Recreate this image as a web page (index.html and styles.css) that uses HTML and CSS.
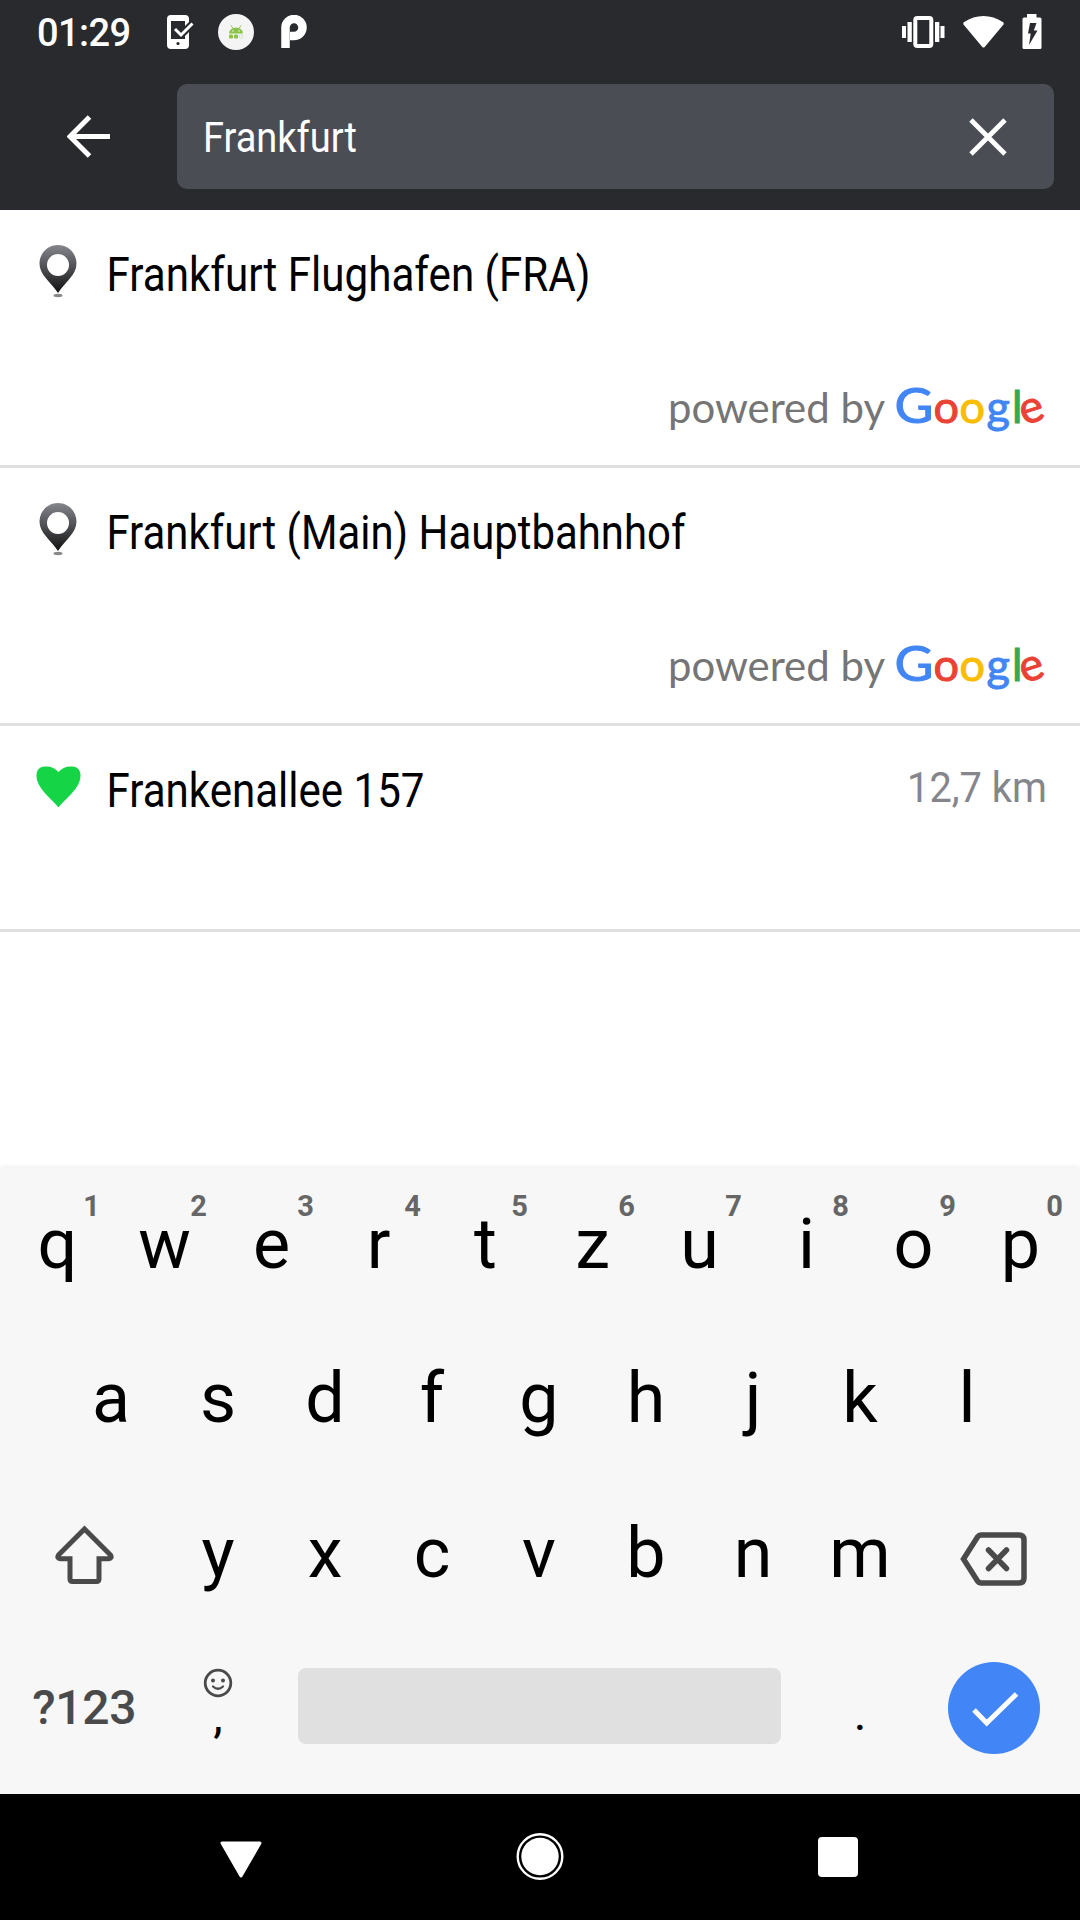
FILE: index.html
```html
<!DOCTYPE html>
<html lang="de">

<head>
    <meta charset="UTF-8">
    <meta name="viewport" content="width=device-width, initial-scale=1.0">
    <title>Frankfurt</title>
    <link rel="stylesheet" href="styles.css">
</head>

<body>

    <header class="header">
        <div class="status-bar">
            <span class="clock">01:29</span>
            <svg class="status-phone" width="28" height="34" viewBox="0 0 28 34">
                <path d="M4 0h14q4 0 4 4v3l-4 4V6H4v18h14v-3l4-4v13q0 4-4 4H4q-4 0-4-4V4q0-4 4-4z" fill="#fff"/>
                <path d="M8 14l6 6 11.500-11.500" fill="none" stroke="#fff" stroke-width="3"/>
                <circle cx="11" cy="28.500" r="1.600" fill="#292a2e"/>
            </svg>
            <svg class="status-android" width="36" height="36" viewBox="0 0 36 36">
                <circle cx="18" cy="18" r="18" fill="#f4f4f4"/>
                <path d="M11 19.500a7 6 0 0 1 14 0z" fill="#8bc34a"/>
                <path d="M13 11.500l2 3M23 11.500l-2 3" stroke="#8bc34a" stroke-width="1"/>
                <circle cx="15" cy="17" r=".7" fill="#fff"/>
                <circle cx="21" cy="17" r=".7" fill="#fff"/>
                <rect x="11" y="20.500" width="4" height="4" rx="1.300" fill="#8bc34a"/>
                <rect x="16" y="20.500" width="4" height="4" rx="1.300" fill="#8bc34a"/>
                <rect x="21.300" y="20.800" width="3.400" height="3.400" rx="1" fill="none" stroke="#c5e1a5" stroke-width=".7"/>
            </svg>
            <svg class="status-p" width="26" height="33" viewBox="0 0 26 33">
                <path d="M4.500 33V12.500a8.500 8.500 0 1 1 8.500 8.500H9" fill="none" stroke="#fff" stroke-width="8.500"/>
            </svg>
            <div class="status-right">
                <svg width="43" height="32" viewBox="0 0 43 32">
                    <path d="M0 10h4v12H0zM5.500 6h4.300v20H5.500zM33 6h4.300v20H33zM38.500 10h4v12h-4z" fill="#fff"/>
                    <rect x="13.300" y="2" width="16" height="28" rx="2" fill="none" stroke="#fff" stroke-width="4"/>
                </svg>
                <svg width="41" height="32" viewBox="0 0 41 32">
                    <path d="M.5 8.500Q-.3 7 1.200 6 10 0 20.500 0t19.300 6q1.500 1 .7 2.500L21.700 31q-1.200 1.200-2.400 0z" fill="#fff"/>
                </svg>
                <svg width="20" height="35" viewBox="0 0 20 35">
                    <path d="M5 0h9.500v3.500H18q1.500 0 1.500 1.500v28.500q0 1.500-1.500 1.500H2q-1.500 0-1.500-1.500V5Q.5 3.500 2 3.500h3z" fill="#fff"/>
                    <path d="M8 9h6.500l-2.700 7.500h3.700L7 31l1.700-11.500H6z" fill="#292a2e"/>
                </svg>
            </div>
        </div>
        <div class="toolbar">
            <svg class="back" width="44" height="43" viewBox="0 0 44 43">
                <path d="M43 21.500H4M22.500 2L3 21.500 22.500 41" fill="none" stroke="#fff" stroke-width="5"/>
            </svg>
            <div class="search-box">
                <svg class="search-text" width="170" height="60">
                    <text x="3" y="44.500" textLength="154" lengthAdjust="spacingAndGlyphs">Frankfurt</text>
                </svg>
                <svg class="clear" width="38" height="38" viewBox="0 0 38 38">
                    <path d="M2 2l34 34M36 2L2 36" stroke="#fff" stroke-width="4.800"/>
                </svg>
            </div>
        </div>
    </header>

    <main class="results">
        <div class="result">
            <div class="result-line">
                <svg class="pin" width="46" height="60" viewBox="0 0 46 60">
                    <defs>
                        <linearGradient id="pinFill" x1="0" y1="0" x2="0" y2="1">
                            <stop offset="0" stop-color="#85868c"/>
                            <stop offset=".5" stop-color="#4b4c50"/>
                            <stop offset="1" stop-color="#111"/>
                        </linearGradient>
                    </defs>
                    <ellipse cx="23" cy="51.500" rx="4.500" ry="1.700" fill="#888"/>
                    <path fill="url(#pinFill)" fill-rule="evenodd" d="M23 1c10.500 0 18.500 8.500 18.500 18.500C41.500 31 31 37 23 49 15 37 4.500 31 4.500 19.500 4.500 9.500 12.500 1 23 1zm0 9a11 11 0 1 0 0 22 11 11 0 0 0 0-22z"/>
                </svg>
                <svg class="title" width="700" height="60">
                    <text x="5.500" y="45" textLength="484" lengthAdjust="spacingAndGlyphs">Frankfurt Flughafen (FRA)</text>
                </svg>
            </div>
            <svg class="powered" width="390" height="60">
                <text class="powered-by" x="4" y="42" textLength="217" lengthAdjust="spacingAndGlyphs">powered by</text>
                <g class="google">
                    <text class="g-blue g-cap" x="230.500" y="42" textLength="39" lengthAdjust="spacingAndGlyphs">G</text>
                    <text class="g-red" x="269.500" y="42">o</text>
                    <text class="g-yellow" x="295.500" y="42">o</text>
                    <text class="g-blue" x="322.500" y="42">g</text>
                    <text class="g-green g-l" x="348" y="42">l</text>
                    <text class="g-red" x="360" y="44.500" rotate="-18">e</text>
                </g>
            </svg>
        </div>
        <div class="result">
            <div class="result-line">
                <svg class="pin" width="46" height="60" viewBox="0 0 46 60">
                    <ellipse cx="23" cy="51.500" rx="4.500" ry="1.700" fill="#888"/>
                    <path fill="url(#pinFill)" fill-rule="evenodd" d="M23 1c10.500 0 18.500 8.500 18.500 18.500C41.500 31 31 37 23 49 15 37 4.500 31 4.500 19.500 4.500 9.500 12.500 1 23 1zm0 9a11 11 0 1 0 0 22 11 11 0 0 0 0-22z"/>
                </svg>
                <svg class="title" width="700" height="60">
                    <text x="5.500" y="45" textLength="579" lengthAdjust="spacingAndGlyphs">Frankfurt (Main) Hauptbahnhof</text>
                </svg>
            </div>
            <svg class="powered" width="390" height="60">
                <text class="powered-by" x="4" y="42" textLength="217" lengthAdjust="spacingAndGlyphs">powered by</text>
                <g class="google">
                    <text class="g-blue g-cap" x="230.500" y="42" textLength="39" lengthAdjust="spacingAndGlyphs">G</text>
                    <text class="g-red" x="269.500" y="42">o</text>
                    <text class="g-yellow" x="295.500" y="42">o</text>
                    <text class="g-blue" x="322.500" y="42">g</text>
                    <text class="g-green g-l" x="348" y="42">l</text>
                    <text class="g-red" x="360" y="44.500" rotate="-18">e</text>
                </g>
            </svg>
        </div>
        <div class="result result-short">
            <div class="result-line">
                <svg class="pin" width="46" height="60" viewBox="0 0 46 60">
                    <path d="M23.500 47.500C16.500 38.500 1.500 28.500 1.500 15.500 1.500 8 6.500 6.500 11.500 6.500c5 0 9 2 12 5.500 3-3.500 7-5.500 12-5.500s10 1.500 10 9c0 13-15 23-22 32z" fill="#15d446"/>
                </svg>
                <svg class="title" width="700" height="60">
                    <text x="5.500" y="45" textLength="318" lengthAdjust="spacingAndGlyphs">Frankenallee 157</text>
                </svg>
                <svg class="distance" width="150" height="60">
                    <text x="3" y="41.500" textLength="140" lengthAdjust="spacingAndGlyphs">12,7 km</text>
                </svg>
            </div>
        </div>
    </main>

    <section class="keyboard">
        <div class="key-row">
            <div class="key">q<sup class="hint">1</sup></div>
            <div class="key">w<sup class="hint">2</sup></div>
            <div class="key">e<sup class="hint">3</sup></div>
            <div class="key">r<sup class="hint">4</sup></div>
            <div class="key">t<sup class="hint">5</sup></div>
            <div class="key">z<sup class="hint">6</sup></div>
            <div class="key">u<sup class="hint">7</sup></div>
            <div class="key">i<sup class="hint">8</sup></div>
            <div class="key">o<sup class="hint">9</sup></div>
            <div class="key">p<sup class="hint">0</sup></div>
        </div>
        <div class="key-row">
            <div class="key">a</div>
            <div class="key">s</div>
            <div class="key">d</div>
            <div class="key">f</div>
            <div class="key">g</div>
            <div class="key">h</div>
            <div class="key">j</div>
            <div class="key">k</div>
            <div class="key">l</div>
        </div>
        <div class="key-row">
            <div class="key key-wide">
                <svg class="shift" width="60" height="60" viewBox="0 0 60 60">
                    <path d="M30.500 4L4.500 30q-2 3.500 2 3.800H16V54q0 2.500 2.500 2.500h24q2.500 0 2.500-2.500V33.800h9.500q4-.3 2-3.800z" fill="none" stroke="#4a4a4a" stroke-width="5"/>
                </svg>
            </div>
            <div class="key">y</div>
            <div class="key">x</div>
            <div class="key">c</div>
            <div class="key">v</div>
            <div class="key">b</div>
            <div class="key">n</div>
            <div class="key">m</div>
            <div class="key key-wide">
                <svg class="backspace" width="68" height="54" viewBox="0 0 68 54">
                    <path d="M21 3h38q5 0 5 5v38q0 5-5 5H21q-2 0-3.500-2L3.500 27l14-22Q19 3 21 3z" fill="none" stroke="#4a4a4a" stroke-width="5.500"/>
                    <path d="M28.500 18l18 18.500M46.500 18l-18 18.500" stroke="#4a4a4a" stroke-width="5.500" stroke-linecap="round"/>
                </svg>
            </div>
        </div>
        <div class="key-row key-row-last">
            <div class="key key-wide key-symbols">?123</div>
            <div class="key key-comma">
                <svg class="smiley" width="30" height="30" viewBox="0 0 30 30">
                    <circle cx="15" cy="15" r="12.800" fill="none" stroke="#4a4a4a" stroke-width="2.800"/>
                    <circle cx="10" cy="12.500" r="2" fill="#4a4a4a"/>
                    <circle cx="20" cy="12.500" r="2" fill="#4a4a4a"/>
                    <path d="M10 18.500q5 4.500 10 0" fill="none" stroke="#4a4a4a" stroke-width="2.200" stroke-linecap="round"/>
                </svg>
                <span>,</span>
            </div>
            <div class="space"></div>
            <div class="key key-dot"><span>.</span></div>
            <div class="key key-wide">
                <svg width="92" height="92" viewBox="0 0 92 92">
                    <circle cx="46" cy="46" r="46" fill="#4285f6"/>
                    <path d="M26 48l12.700 13L68.500 32" fill="none" stroke="#fff" stroke-width="5"/>
                </svg>
            </div>
        </div>
    </section>

    <nav class="nav-bar">
        <svg width="48" height="48" viewBox="0 0 48 48">
            <path d="M5 10h38L24 43z" fill="#fff" stroke="#fff" stroke-width="3" stroke-linejoin="round"/>
        </svg>
        <svg width="48" height="48" viewBox="0 0 48 48">
            <circle cx="24" cy="23.500" r="22.300" fill="none" stroke="#fff" stroke-width="2.400"/>
            <circle cx="24" cy="23.500" r="18.700" fill="#fff"/>
        </svg>
        <svg width="48" height="48" viewBox="0 0 48 48">
            <rect x="4" y="4" width="40" height="40" rx="4" fill="#fff"/>
        </svg>
    </nav>

</body>

</html>
```
FILE: styles.css
```css
* {
    box-sizing: border-box;
}

body {
    margin: 0;
    width: 1080px;
    height: 1920px;
    display: flex;
    flex-direction: column;
    background-color: #fff;
    font-family: Roboto, sans-serif;
    overflow: hidden;
}

svg {
    display: block;
    flex: none;
}

.header {
    height: 210px;
    background-color: #292a2e;
    color: #fff;
}

.status-bar {
    display: flex;
    align-items: center;
    height: 63px;
    padding: 0 38px 0 37px;
}

.clock {
    width: 130px;
    font-size: 38px;
    font-weight: 500;
    letter-spacing: -0.6px;
    line-height: 62px;
    padding-top: 3px;
}

.status-android {
    margin-left: 23px;
}

.status-p {
    margin-left: 27px;
}

.status-right {
    display: flex;
    align-items: center;
    gap: 18px;
    margin-left: auto;
}

.toolbar {
    display: flex;
    align-items: center;
    height: 147px;
    padding: 0 26px 0 67px;
}

.search-box {
    display: flex;
    align-items: center;
    justify-content: space-between;
    width: 877px;
    height: 105px;
    margin-left: auto;
    padding: 0 47px 0 23px;
    border-radius: 10px;
    background-color: #4b4d55;
}

.search-text text {
    font-size: 42px;
    fill: #fff;
}

.results {
    height: 958px;
}

.result {
    display: flex;
    flex-direction: column;
    justify-content: space-between;
    height: 258px;
    padding: 34px 26px 24px 35px;
    border-bottom: 3px solid #e0e0e0;
}

.result-short {
    height: 206px;
}

.result-line {
    display: flex;
    gap: 20px;
}

.title {
    margin-top: 2px;
}

.title text {
    font-size: 48px;
    fill: #000;
}

.result-short .title {
    flex: 1;
}

.distance text {
    font-size: 42px;
    fill: #85868c;
}

.powered {
    align-self: flex-end;
    font-family: Lato, sans-serif;
}

.powered-by {
    font-size: 42px;
    fill: #757575;
}

.google {
    font-size: 45px;
    stroke-width: 1px;
}

.g-cap {
    font-size: 49px;
}

.g-l {
    font-size: 44px;
}

.g-blue {
    fill: #4285f4;
    stroke: #4285f4;
}

.g-red {
    fill: #ea4335;
    stroke: #ea4335;
}

.g-yellow {
    fill: #fbbc05;
    stroke: #fbbc05;
}

.g-green {
    fill: #34a853;
    stroke: #34a853;
}

.keyboard {
    height: 626px;
    padding-right: 2px;
    background-color: #f7f7f7;
    box-shadow: 0 -1px 5px rgba(0, 0, 0, 0.08);
}

.key-row {
    display: flex;
    justify-content: center;
    height: 155px;
}

.key-row:first-child {
    height: 152px;
}

.key-row-last {
    height: 156px;
}

.key {
    position: relative;
    display: flex;
    align-items: center;
    justify-content: center;
    width: 107px;
    font-size: 70px;
    color: #000;
}

.key-wide {
    width: 160.5px;
}

.hint {
    position: absolute;
    top: 20px;
    right: 11px;
    font-size: 29px;
    font-weight: 700;
    line-height: 36px;
    color: #666;
}

.shift {
    margin-top: 5px;
}

.backspace {
    margin-top: 12px;
}

.key-symbols {
    padding-bottom: 2px;
    font-size: 48px;
    font-weight: 500;
    letter-spacing: -0.3px;
    color: #4a4a4a;
}

.key-comma {
    flex-direction: column;
    justify-content: flex-start;
    padding-top: 38px;
    font-size: 48px;
    line-height: 36px;
}

.key-dot {
    align-items: flex-end;
    padding-bottom: 48px;
    font-size: 48px;
    line-height: 48px;
}

.space {
    width: 483px;
    height: 76px;
    margin: 38px 26px 0;
    border-radius: 8px;
    background-color: #e0e0e0;
}

.nav-bar {
    display: flex;
    align-items: center;
    gap: 250.5px;
    height: 126px;
    padding: 0 217px;
    background-color: #000;
}
```
